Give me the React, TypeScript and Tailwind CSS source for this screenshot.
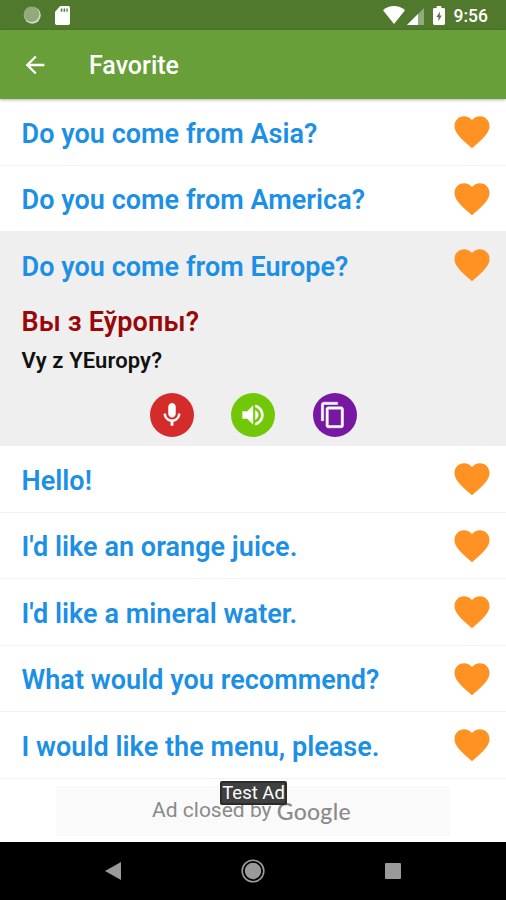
const HEART =
  'M12 21.35l-1.45-1.32C5.4 15.36 2 12.28 2 8.5 2 5.42 4.42 3 7.5 3c1.74 0 3.41.81 4.5 2.09C13.09 3.81 14.76 3 16.5 3 19.58 3 22 5.42 22 8.5c0 3.78-3.4 6.86-8.55 11.54L12 21.35z';

function Phrase({ text }: { text: string }) {
  return (
    <div className="flex h-[66px] items-center justify-between pr-[13.5px] pl-[21.5px]">
      <span className="pt-[3px] text-[27px] leading-8 font-semibold tracking-[0.04px] whitespace-nowrap text-[#1c8fe6]">
        {text}
      </span>
      <svg viewBox="0 0 24 24" className="size-[42px] shrink-0" fill="#ff9222">
        <path d={HEART} />
      </svg>
    </div>
  );
}

function Row({ text }: { text: string }) {
  return (
    <li className="h-[66.5px] border-b border-[#f2f2f2]">
      <Phrase text={text} />
    </li>
  );
}

function StatusBar() {
  return (
    <div className="flex h-[30px] items-center justify-between bg-[#50792d] pr-[18px] pl-[23px]">
      <div className="flex items-center gap-[14px]">
        <svg viewBox="0 0 18 18" className="size-[18px]">
          <circle cx="9.3" cy="9.3" r="8.4" fill="#d3dfca" />
          <circle cx="8.6" cy="8.2" r="7.8" fill="#91ab7b" />
        </svg>
        <svg viewBox="0 0 15 19" className="h-[19px] w-[15px]">
          <path d="M5.2 0H13.3Q15 0 15 1.7V17.3Q15 19 13.3 19H1.7Q0 19 0 17.3V5.7Z" fill="#fff" />
          <path d="M5.8 2.5h1.5v3.2H5.8zM8.6 2.5h1.5v3.2H8.6zM11.4 2.5h1.3v3.2h-1.3z" fill="#50792d" />
        </svg>
      </div>
      <div className="flex items-center">
        <svg viewBox="0 0 22 18" className="h-[18px] w-[22px]" fill="#fff">
          <path d="M0 4.2Q5 0 11 0T22 4.2L11 18Z" />
        </svg>
        <svg viewBox="0 0 17 17" className="mt-[2px] ml-[2px] h-[17px] w-[17px]">
          <path d="M17 0V17H0Z" fill="#91ab7b" />
          <path d="M11 6V17H0Z" fill="#fff" />
        </svg>
        <svg viewBox="0 0 12 19" className="ml-[9px] h-[19px] w-[12px]">
          <path d="M3.7 0H8.3V2H10.6Q12 2 12 3.4V17.6Q12 19 10.6 19H1.4Q0 19 0 17.6V3.4Q0 2 1.4 2H3.7Z" fill="#fff" />
          <path d="M7 5.4L3.4 10.9H5.5V15.2L8.7 9.6H6.7Z" fill="#50792d" />
        </svg>
        <span className="ml-[9px] pt-[2px] text-[17.5px] leading-5 font-medium text-white">9:56</span>
      </div>
    </div>
  );
}

function Actions() {
  return (
    <div className="mt-[17.5px] flex justify-center gap-[37.5px]">
      <button className="flex size-11 items-center justify-center rounded-full bg-[#d42b2b]">
        <svg viewBox="0 0 24 24" className="size-7" fill="#fff" stroke="#fff" strokeWidth="0.4">
          <path d="M12 14c1.66 0 2.99-1.34 2.99-3L15 5c0-1.66-1.34-3-3-3S9 3.34 9 5v6c0 1.66 1.34 3 3 3zm5.3-3c0 3-2.54 5.1-5.3 5.1S6.7 14 6.7 11H5c0 3.41 2.72 6.23 6 6.72V21h2v-3.28c3.28-.48 6-3.3 6-6.72h-1.7z" />
        </svg>
      </button>
      <button className="flex size-11 items-center justify-center rounded-full bg-[#72c808]">
        <svg viewBox="0 0 24 24" className="size-7" fill="#fff" stroke="#fff" strokeWidth="0.3">
          <path d="M3 9v6h4l5 5V4L7 9H3zm13.5 3c0-1.77-1.02-3.29-2.5-4.03v8.05c1.48-.73 2.5-2.25 2.5-4.02zM14 3.23v2.06c2.89.86 5 3.54 5 6.71s-2.11 5.85-5 6.71v2.06c4.01-.91 7-4.49 7-8.77s-2.99-7.86-7-8.77z" />
        </svg>
      </button>
      <button className="flex size-11 items-center justify-center rounded-full bg-[#7718a2]">
        <svg viewBox="0 0 24 24" className="mr-1 size-7" fill="#fff" stroke="#fff" strokeWidth="0.4">
          <path d="M16 1H4c-1.1 0-2 .9-2 2v14h2V3h12V1zm3 4H8c-1.1 0-2 .9-2 2v14c0 1.1.9 2 2 2h11c1.1 0 2-.9 2-2V7c0-1.1-.9-2-2-2zm0 16H8V7h11v14z" />
        </svg>
      </button>
    </div>
  );
}

export default function App() {
  return (
    <div className="flex h-[900px] w-[506px] flex-col overflow-hidden bg-white font-[Roboto,sans-serif]">
      <StatusBar />
      <header className="z-10 flex h-[69px] shrink-0 items-center bg-[#689f38] pl-[21px] shadow-[0_1px_3px_rgba(0,0,0,0.3)]">
        <svg viewBox="0 0 24 24" className="size-7" fill="#fff">
          <path d="M20 11H7.83l5.59-5.59L12 4l-8 8 8 8 1.41-1.41L7.83 13H20v-2z" />
        </svg>
        <h1 className="ml-[40px] pt-[3px] text-[25px] leading-8 font-medium text-white">Favorite</h1>
      </header>
      <ul className="shrink-0">
        <Row text="Do you come from Asia?" />
        <li className="h-[65.5px]">
          <Phrase text="Do you come from America?" />
        </li>
        <li className="h-[215px] bg-[#efefef] pt-px">
          <Phrase text="Do you come from Europe?" />
          <p className="mt-[8px] pl-[21.5px] text-[27px] leading-8 font-semibold tracking-[0.15px] text-[#990808]">
            Вы з Еўропы?
          </p>
          <p className="mt-[9px] pl-[21.5px] text-[22px] leading-7 font-semibold tracking-[0.1px] text-[#111]">
            Vy z YEuropy?
          </p>
          <Actions />
        </li>
        <Row text="Hello!" />
        <Row text="I'd like an orange juice." />
        <Row text="I'd like a mineral water." />
        <Row text="What would you recommend?" />
        <Row text="I would like the menu, please." />
      </ul>
      <div className="relative flex flex-1 justify-center pt-[7px]">
        <div className="flex h-[50px] w-[394px] items-center justify-center bg-[#fafafa] pt-px pr-[3px] text-[#8a8a8a]">
          <span className="text-[21px] whitespace-pre">Ad closed by </span>
          <span className="font-[Lato,sans-serif] text-[23px] font-medium tracking-[0.3px]">Google</span>
        </div>
        <span className="absolute top-[2px] left-[220px] flex h-[24px] w-[67px] items-center justify-center rounded-[2px] border-2 border-[#2b2b2b] bg-[#404040] pt-[3px] text-[18.5px] whitespace-nowrap text-white">
          Test Ad
        </span>
      </div>
      <nav className="flex h-[58px] shrink-0 items-center bg-black pl-[105px]">
        <svg viewBox="0 0 16 18" className="h-[18px] w-[16px]" fill="#9a9a9a">
          <path d="M16 0V18L0 9Z" />
        </svg>
        <svg viewBox="0 0 24 24" className="ml-[120px] size-6">
          <circle cx="12" cy="12" r="10.8" fill="none" stroke="#9a9a9a" strokeWidth="1.6" />
          <circle cx="12" cy="12" r="8.2" fill="#9a9a9a" />
        </svg>
        <div className="ml-[120px] size-4 rounded-[1px] bg-[#9a9a9a]" />
      </nav>
    </div>
  );
}
